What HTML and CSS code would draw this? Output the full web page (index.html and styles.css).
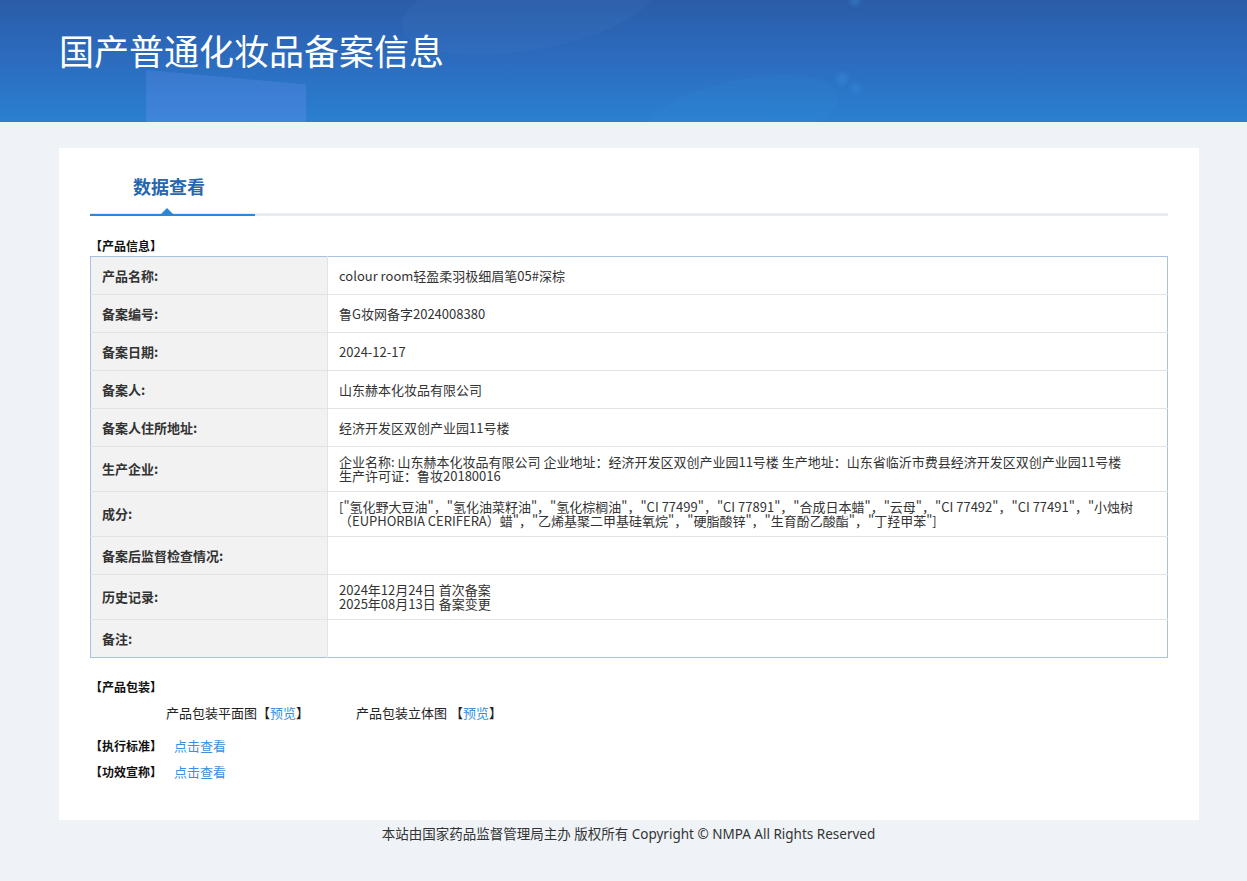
FILE: index.html
```html
<!DOCTYPE html>
<html lang="zh-CN">
<head>
<meta charset="utf-8">
<title>国产普通化妆品备案信息</title>
<link rel="stylesheet" href="styles.css">
</head>
<body>
<header class="banner">
  <div class="banner-deco deco-a"></div>
  <div class="banner-deco deco-b"></div>
  <div class="banner-deco deco-c"></div>
  <div class="banner-deco dot dot-1"></div>
  <div class="banner-deco dot dot-2"></div>
  <div class="banner-deco dot dot-3"></div>
  <h1 class="banner-title">国产普通化妆品备案信息</h1>
</header>

<main class="card">
  <div class="tabs">
    <div class="tab">数据查看<span class="tab-arrow"></span></div>
  </div>

  <div class="section-title">【产品信息】</div>
  <table class="info">
    <tr><th>产品名称:</th><td>colour room轻盈柔羽极细眉笔05#深棕</td></tr>
    <tr><th>备案编号:</th><td>鲁G妆网备字2024008380</td></tr>
    <tr><th>备案日期:</th><td>2024-12-17</td></tr>
    <tr><th>备案人:</th><td>山东赫本化妆品有限公司</td></tr>
    <tr><th>备案人住所地址:</th><td>经济开发区双创产业园11号楼</td></tr>
    <tr><th>生产企业:</th><td>企业名称:&nbsp;山东赫本化妆品有限公司 企业地址：经济开发区双创产业园11号楼 生产地址：山东省临沂市费县经济开发区双创产业园11号楼<br>生产许可证：鲁妆20180016</td></tr>
    <tr><th>成分:</th><td>["氢化野大豆油"，"氢化油菜籽油"，"氢化棕榈油"，"CI 77499"，"CI 77891"，"合成日本蜡"，"云母"，"CI 77492"，"CI 77491"，"小烛树（EUPHORBIA CERIFERA）蜡"，"乙烯基聚二甲基硅氧烷"，"硬脂酸锌"，"生育酚乙酸酯"，"丁羟甲苯"]</td></tr>
    <tr><th>备案后监督检查情况:</th><td></td></tr>
    <tr><th>历史记录:</th><td>2024年12月24日 首次备案<br>2025年08月13日 备案变更</td></tr>
    <tr><th>备注:</th><td></td></tr>
  </table>

  <div class="section-title pack-title">【产品包装】</div>
  <div class="pack-row">
    <span class="pack-item">产品包装平面图【<a class="link" href="#">预览</a>】</span>
    <span class="pack-item">产品包装立体图 【<a class="link" href="#">预览</a>】</span>
  </div>

  <div class="line-item"><span class="section-title inline">【执行标准】</span><a class="link" href="#">点击查看</a></div>
  <div class="line-item"><span class="section-title inline">【功效宣称】</span><a class="link" href="#">点击查看</a></div>
</main>

<footer class="footer">本站由国家药品监督管理局主办 版权所有 Copyright © NMPA All Rights Reserved</footer>
</body>
</html>
```

FILE: styles.css
```css
* { box-sizing: border-box; }

html, body {
  margin: 0;
  padding: 0;
}

body {
  background: #eff3f7;
  font-family: "Noto Sans", "Noto Sans CJK SC", sans-serif;
  color: #333;
  font-size: 13px;
}

.banner {
  position: relative;
  height: 122px;
  overflow: hidden;
  background: linear-gradient(180deg, #2b5ca8 0%, #2c6cbf 50%, #2a80d0 100%);
}

.banner-deco {
  position: absolute;
  pointer-events: none;
}

.deco-a {
  left: 146px;
  top: 70px;
  width: 160px;
  height: 60px;
  background: linear-gradient(180deg, rgba(90, 140, 230, 0.3), rgba(90, 140, 230, 0.45));
  clip-path: polygon(0 0, 100% 24%, 100% 100%, 0 100%);
}

.deco-b {
  left: 400px;
  top: -40px;
  width: 260px;
  height: 90px;
  border-radius: 50%;
  background: rgba(120, 160, 220, 0.07);
  transform: rotate(-10deg);
}

.deco-c {
  left: 640px;
  top: 80px;
  width: 200px;
  height: 70px;
  border-radius: 50%;
  background: rgba(60, 150, 220, 0.12);
  transform: rotate(-12deg);
}

.dot {
  border-radius: 50%;
  background: rgba(60, 140, 220, 0.4);
  filter: blur(2px);
}
.dot-1 { left: 850px; top: -4px; width: 10px; height: 10px; }
.dot-2 { left: 836px; top: 72px; width: 12px; height: 14px; }
.dot-3 { left: 851px; top: 83px; width: 10px; height: 10px; }

.banner-title {
  position: relative;
  margin: 0;
  padding: 29px 0 0 59px;
  font-family: "Noto Sans CJK SC", sans-serif;
  font-weight: 400;
  font-size: 35px;
  line-height: 42px;
  color: #fff;
  letter-spacing: 0;
}

.card {
  width: 1140px;
  margin: 26px 0 0 59px;
  background: #fff;
  padding: 24px 31px 40px;
}

.tabs {
  border-bottom: 3px solid #e8ecf0;
  display: flex;
}

.tab {
  position: relative;
  width: 165px;
  padding: 0 0 14px 43px;
  margin-bottom: -3px;
  border-bottom: 2px solid #2b87da;
  font-family: "Noto Sans CJK SC", sans-serif;
  font-weight: 700;
  font-size: 18px;
  line-height: 28px;
  color: #2566b0;
}

.tab-arrow {
  position: absolute;
  left: 71px;
  bottom: 0;
  width: 0;
  height: 0;
  border-left: 6px solid transparent;
  border-right: 6px solid transparent;
  border-bottom: 6px solid #2b87da;
}

.section-title {
  font-family: "Noto Sans CJK SC", sans-serif;
  font-weight: 700;
  font-size: 12px;
  line-height: 16px;
  color: #111;
  margin: 22px 0 2px;
}

.section-title.inline {
  margin: 0 12px 0 0;
}

.info {
  width: 100%;
  border-collapse: collapse;
  border: 1px solid #a9c1de;
  font-family: "Noto Sans CJK SC", sans-serif;
}

.info th,
.info td {
  height: 38px;
  padding: 8px 11px;
  border-top: 1px solid #e3e3e3;
  font-size: 13px;
  line-height: 14px;
  color: #333;
  text-align: left;
  vertical-align: middle;
}

.info tr:first-child th,
.info tr:first-child td {
  border-top: none;
}

.info th {
  width: 237px;
  padding-left: 11px;
  background: #f2f2f2;
  font-weight: 700;
  border-right: 1px solid #e3e3e3;
}

.info td {
  background: #fff;
  font-weight: 400;
}

.pack-title {
  margin-top: 21px;
}

.pack-row {
  display: flex;
  padding-left: 76px;
  margin-top: 10px;
  font-family: "Noto Sans CJK SC", sans-serif;
  font-size: 13px;
  line-height: 16px;
  color: #222;
}

.pack-item {
  width: 190px;
}

.link {
  color: #3a8fe0;
  text-decoration: none;
}

.line-item {
  display: flex;
  align-items: center;
  font-family: "Noto Sans CJK SC", sans-serif;
  font-size: 13px;
  line-height: 16px;
  margin-top: 10px;
}

.line-item + .line-item {
  margin-top: 10px;
}

.pack-row + .line-item {
  margin-top: 17px;
}

.footer {
  text-align: center;
  font-size: 13.5px;
  line-height: 20px;
  padding: 4px 0 20px 10px;
  color: #333;
}
```
